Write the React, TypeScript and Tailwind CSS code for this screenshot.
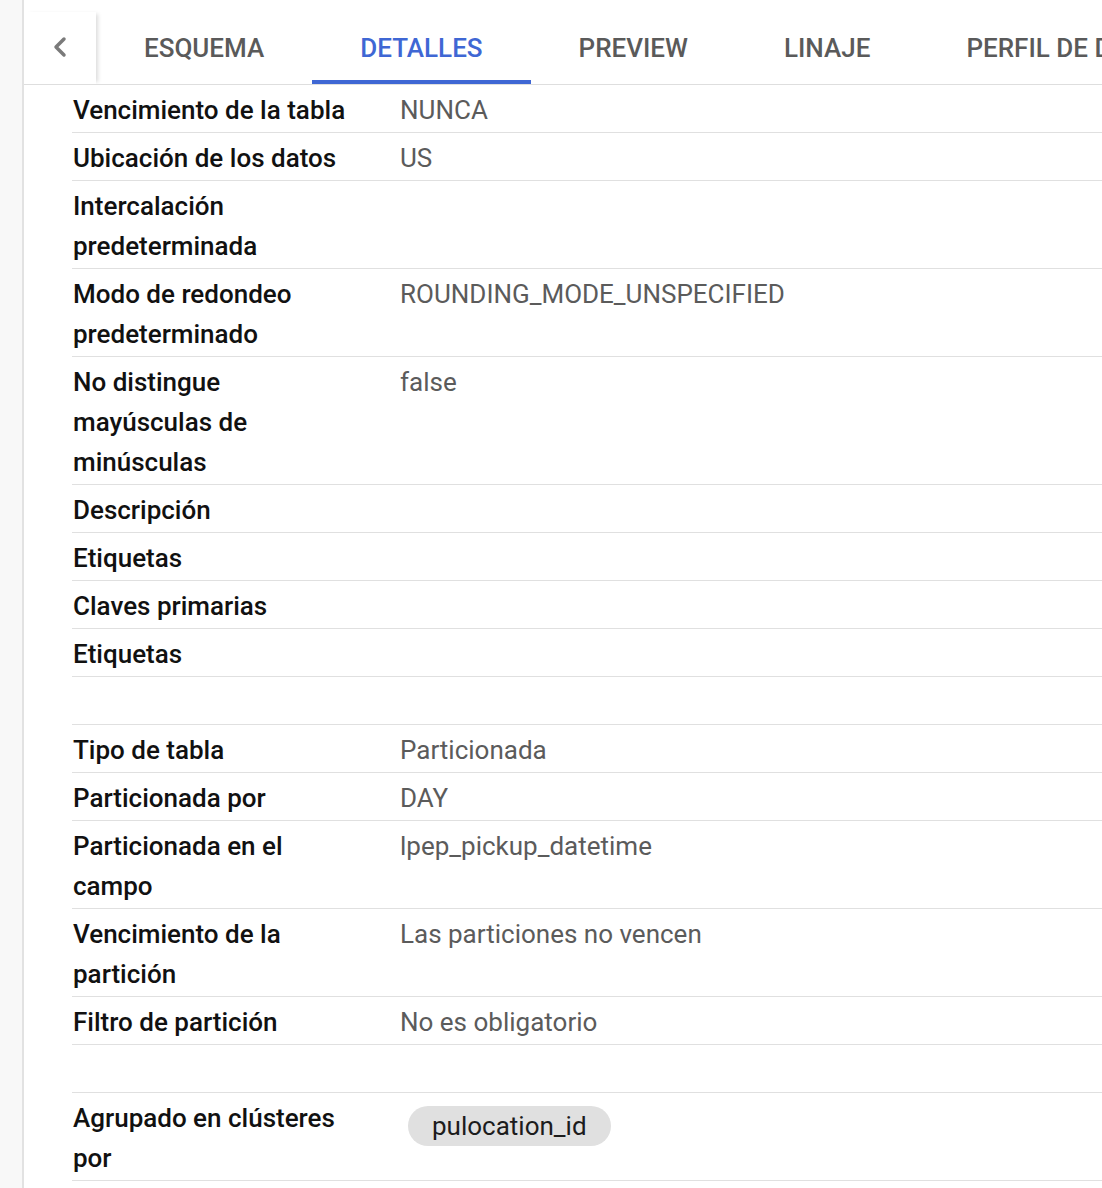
import { ChevronLeft } from 'lucide-react';

type Row = { label: string; value?: string; chip?: string; spacer?: boolean };

const rows: Row[] = [
  { label: 'Vencimiento de la tabla', value: 'NUNCA' },
  { label: 'Ubicación de los datos', value: 'US' },
  { label: 'Intercalación predeterminada' },
  { label: 'Modo de redondeo predeterminado', value: 'ROUNDING_MODE_UNSPECIFIED' },
  { label: 'No distingue mayúsculas de minúsculas', value: 'false' },
  { label: 'Descripción' },
  { label: 'Etiquetas' },
  { label: 'Claves primarias' },
  { label: 'Etiquetas' },
  { label: '', spacer: true },
  { label: 'Tipo de tabla', value: 'Particionada' },
  { label: 'Particionada por', value: 'DAY' },
  { label: 'Particionada en el campo', value: 'lpep_pickup_datetime' },
  { label: 'Vencimiento de la partición', value: 'Las particiones no vencen' },
  { label: 'Filtro de partición', value: 'No es obligatorio' },
  { label: '', spacer: true },
  { label: 'Agrupado en clústeres por', chip: 'pulocation_id' },
];

const tabs = ['ESQUEMA', 'DETALLES', 'PREVIEW', 'LINAJE', 'PERFIL DE DATOS'];

const App = () => {
  return (
    <div
      className="flex min-h-screen w-[1102px] overflow-hidden bg-white text-[26px]"
      style={{ fontFamily: 'Roboto, "Noto Sans", sans-serif' }}
    >
      <div className="w-[24px] shrink-0 border-r-2 border-[#e2e2e2] bg-[#f8f8f8]" />
      <div className="min-w-0 flex-1">
        <div className="flex h-[85px] items-end overflow-hidden border-b border-[#dedede]">
          <button className="relative z-10 flex h-[72px] w-[72px] shrink-0 items-center justify-center bg-white shadow-[4px_0_4px_-2px_rgba(0,0,0,0.14)]">
            <ChevronLeft className="-mt-[2px] h-8 w-8 text-[#7a7a7a]" strokeWidth={2.6} />
          </button>
          <div className="flex h-[72px] whitespace-nowrap">
            {tabs.map((t) => (
              <div
                key={t}
                className={`relative flex h-full items-center px-12 font-medium ${
                  t === 'DETALLES' ? 'text-[#3f67d4]' : 'text-[#5a5a5a]'
                }`}
              >
                {t}
                {t === 'DETALLES' && (
                  <div className="absolute bottom-0 left-0 right-0 h-[4px] bg-[#3f67d4]" />
                )}
              </div>
            ))}
          </div>
        </div>
        <div className="pl-12">
          {rows.map((r, i) => (
            <div
              key={i}
              className="flex border-b border-[#e0e0e0] pb-[2px] pt-[5px] leading-[40px]"
            >
              <div className="w-[328px] shrink-0 pl-px pr-12 font-medium text-[#111]">
                {r.spacer ? '\u00a0' : r.label}
              </div>
              <div className="min-w-0 flex-1 whitespace-nowrap text-[#5b5b5b]">
                {r.value}
                {r.chip && (
                  <div className="ml-2 mt-2 flex h-[40px] w-fit items-center rounded-full bg-[#e0e0e0] px-6 leading-none text-[#1c1c1c]">
                    {r.chip}
                  </div>
                )}
              </div>
            </div>
          ))}
        </div>
      </div>
    </div>
  );
};

export default App;
